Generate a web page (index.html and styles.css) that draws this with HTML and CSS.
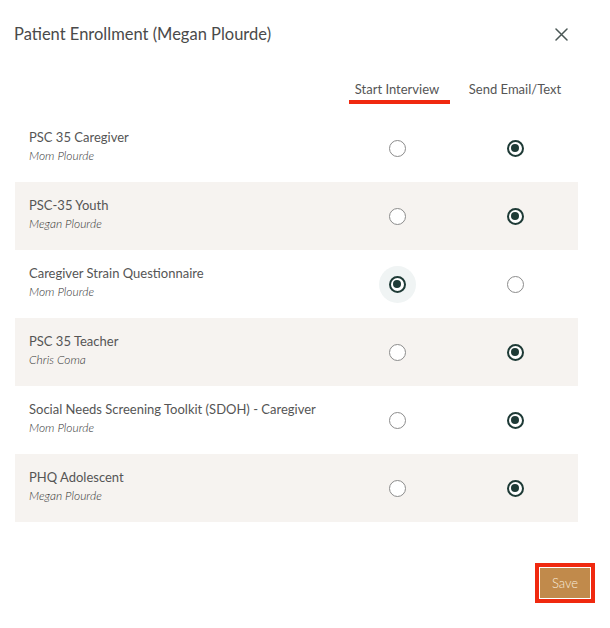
FILE: index.html
```html
<!DOCTYPE html>
<html lang="en">
<head>
<meta charset="utf-8">
<title>Patient Enrollment</title>
<link rel="stylesheet" href="styles.css">
</head>
<body>
<div class="modal">
  <div class="modal-header">
    <h1 class="modal-title">Patient Enrollment (Megan Plourde)</h1>
    <button class="close-btn" aria-label="Close">
      <svg width="13" height="13" viewBox="0 0 13 13"><path d="M1 1 L12 12 M12 1 L1 12" stroke="#4a5755" stroke-width="1.5" stroke-linecap="round" fill="none"/></svg>
    </button>
  </div>

  <div class="table">
    <div class="table-head">
      <div class="cell-name"></div>
      <div class="col-head"><span class="marked">Start Interview</span></div>
      <div class="col-head">Send Email/Text</div>
    </div>

    <div class="row">
      <div class="cell-name"><div class="item-title">PSC 35 Caregiver</div><div class="item-sub">Mom Plourde</div></div>
      <div class="cell-radio"><span class="radio"></span></div>
      <div class="cell-radio"><span class="radio checked"></span></div>
    </div>
    <div class="row shaded">
      <div class="cell-name"><div class="item-title">PSC-35 Youth</div><div class="item-sub">Megan Plourde</div></div>
      <div class="cell-radio"><span class="radio"></span></div>
      <div class="cell-radio"><span class="radio checked"></span></div>
    </div>
    <div class="row">
      <div class="cell-name"><div class="item-title">Caregiver Strain Questionnaire</div><div class="item-sub">Mom Plourde</div></div>
      <div class="cell-radio"><span class="radio checked focused"></span></div>
      <div class="cell-radio"><span class="radio"></span></div>
    </div>
    <div class="row shaded">
      <div class="cell-name"><div class="item-title">PSC 35 Teacher</div><div class="item-sub">Chris Coma</div></div>
      <div class="cell-radio"><span class="radio"></span></div>
      <div class="cell-radio"><span class="radio checked"></span></div>
    </div>
    <div class="row">
      <div class="cell-name"><div class="item-title">Social Needs Screening Toolkit (SDOH) - Caregiver</div><div class="item-sub">Mom Plourde</div></div>
      <div class="cell-radio"><span class="radio"></span></div>
      <div class="cell-radio"><span class="radio checked"></span></div>
    </div>
    <div class="row shaded">
      <div class="cell-name"><div class="item-title">PHQ Adolescent</div><div class="item-sub">Megan Plourde</div></div>
      <div class="cell-radio"><span class="radio"></span></div>
      <div class="cell-radio"><span class="radio checked"></span></div>
    </div>
  </div>

  <div class="modal-footer">
    <div class="highlight-box"><button class="save-btn">Save</button></div>
  </div>
</div>
</body>
</html>
```

FILE: styles.css
```css
* { box-sizing: border-box; }

html, body {
  margin: 0;
  padding: 0;
  background: #ffffff;
}

body {
  font-family: Lato, "Open Sans", "Liberation Sans", sans-serif;
  font-weight: 400;
  color: #4a4a4a;
}

.modal {
  width: 610px;
  height: 628px;
  display: flex;
  flex-direction: column;
}

.modal-header {
  display: flex;
  align-items: center;
  justify-content: space-between;
  padding: 24px 42px 0 14px;
  height: 44px;
}

.modal-title {
  margin: 0;
  font-size: 16.5px;
  font-weight: 400;
  line-height: 20px;
  color: #4a4a4a;
}

.close-btn {
  border: 0;
  background: none;
  padding: 0;
  width: 13px;
  height: 13px;
  display: flex;
  cursor: pointer;
}

.table {
  margin: 36px 32px 0 15px;
  display: flex;
  flex-direction: column;
}

.table-head {
  display: grid;
  grid-template-columns: 1fr 118px 118px 4px;
  height: 34px;
  align-items: start;
}

.col-head {
  text-align: center;
  font-size: 13px;
  line-height: 18px;
  color: #555555;
}

.marked {
  position: relative;
  display: inline-block;
}

.marked::after {
  content: "";
  position: absolute;
  left: -6px;
  width: 101px;
  top: 20px;
  height: 4px;
  background: #f0290f;
}

.row {
  display: grid;
  grid-template-columns: 1fr 118px 118px 4px;
  height: 68px;
  align-items: center;
}

.row.shaded {
  background: #f6f3f0;
}

.cell-name {
  align-self: start;
  padding: 14px 0 0 14px;
}

.item-title {
  font-size: 13px;
  line-height: 18px;
  color: #555555;
}

.item-sub {
  font-size: 12px;
  line-height: 16px;
  font-style: italic;
  font-weight: 300;
  color: #333333;
  margin-top: 2px;
}

.cell-radio {
  display: flex;
  justify-content: center;
  align-items: center;
}

.radio {
  position: relative;
  display: inline-block;
  width: 17px;
  height: 17px;
  border-radius: 50%;
  border: 1.5px solid #8c8c8c;
  background: #ffffff;
}

.radio.checked {
  border: 2px solid #1e3a36;
}

.radio.checked::after {
  content: "";
  position: absolute;
  left: 50%;
  top: 50%;
  width: 8px;
  height: 8px;
  margin: -4px 0 0 -4px;
  border-radius: 50%;
  background: #1e3a36;
}

.radio.focused {
  box-shadow: 0 0 0 10px #f0f4f4;
}

.modal-footer {
  flex: 1;
  display: flex;
  justify-content: flex-end;
  align-items: flex-end;
  padding: 0 15px 25px 0;
}

.highlight-box {
  border: 4px solid #f0290f;
  padding: 1px;
  background: #ffffff;
  display: flex;
}

.save-btn {
  border: 0;
  background: #c18a4b;
  color: #f7eadb;
  font-family: Lato, "Open Sans", "Liberation Sans", sans-serif;
  font-weight: 300;
  font-size: 13px;
  width: 50px;
  height: 30px;
  padding: 0;
  cursor: pointer;
}
```
